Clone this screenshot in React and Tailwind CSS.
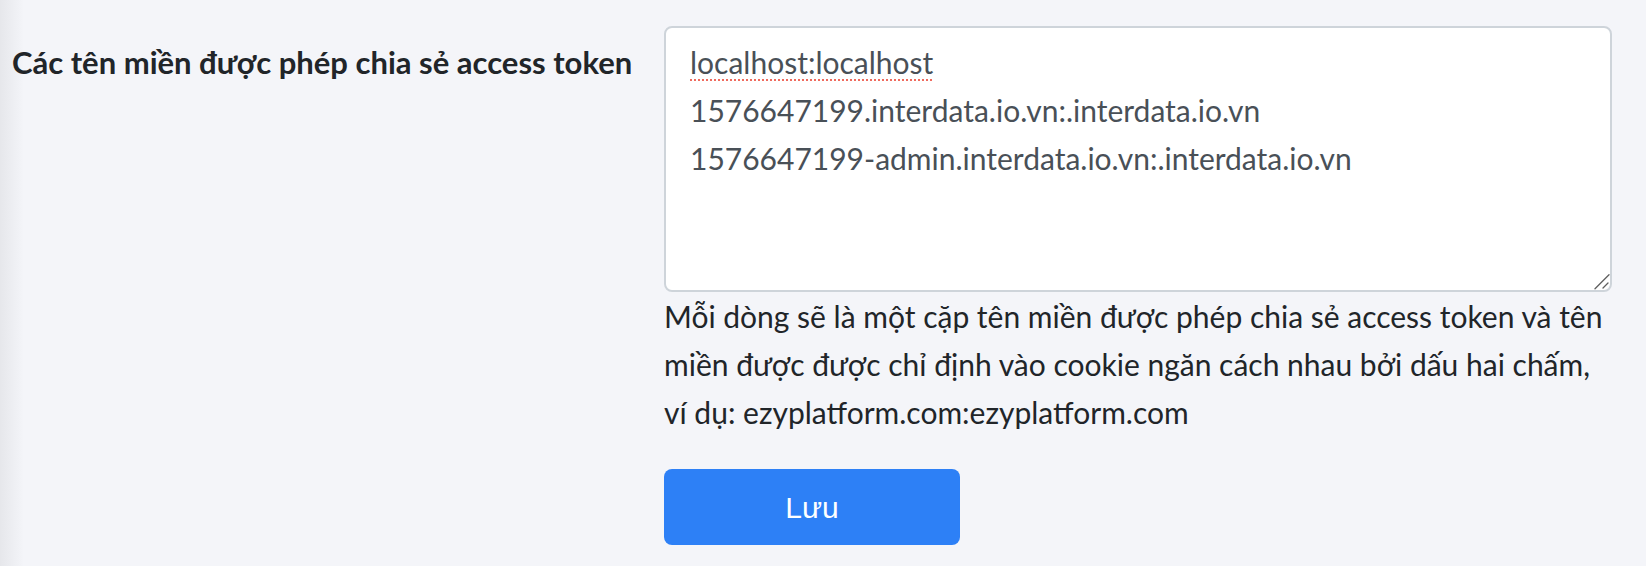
import React from "react";

export default function App() {
  return (
    <div className="w-[1646px] h-[566px] bg-[#f4f5f9] relative overflow-hidden" style={{ fontFamily: "Lato, 'Noto Sans', sans-serif" }}>
      <div className="absolute left-0 top-0 h-full w-[24px] bg-gradient-to-r from-[#e6e7eb] to-[#f4f5f9]" />
      <div className="relative flex pt-[26px]">
        <div className="w-[664px] shrink-0 pl-[12px] pt-[12px]">
          <label className="block text-[31px] leading-[48px] font-bold text-[#212529] whitespace-nowrap">
            Các tên miền được phép chia sẻ access token
          </label>
        </div>
        <div className="w-[948px] shrink-0 flex flex-col">
          <div className="relative box-border h-[266px] bg-white border-2 border-[#ced4da] rounded-[8px] px-[24px] py-[10px] text-[30px] leading-[48px] text-[#495057]">
            <div>
              <span className="underline decoration-dotted decoration-[#ef6b5e] decoration-2 underline-offset-[5px]">localhost:localhost</span>
            </div>
            <div>1576647199.interdata.io.vn:.interdata.io.vn</div>
            <div>1576647199-admin.interdata.io.vn:.interdata.io.vn</div>
            <svg className="absolute right-0 bottom-0 w-[16px] h-[16px]" viewBox="0 0 16 16" fill="none">
              <line x1="1" y1="14.7" x2="15" y2="0.7" stroke="#5f5f5f" strokeWidth="1.3" strokeLinecap="round" />
              <line x1="9" y1="14" x2="14" y2="9" stroke="#5f5f5f" strokeWidth="1.3" strokeLinecap="round" />
            </svg>
          </div>
          <p className="mt-0 text-[30px] leading-[48px] text-[#212529]">
            Mỗi dòng sẽ là một cặp tên miền được phép chia sẻ access token và tên miền được được chỉ định vào cookie ngăn cách nhau bởi dấu hai chấm, ví dụ: ezyplatform.com:ezyplatform.com
          </p>
          <div className="mt-[33px]">
            <button className="w-[296px] h-[76px] bg-[#2d80f6] rounded-[8px] text-white text-[30px] flex items-center justify-center" style={{ fontFamily: "'Liberation Sans', Arial, sans-serif" }}>
              Lưu
            </button>
          </div>
        </div>
      </div>
    </div>
  );
}
